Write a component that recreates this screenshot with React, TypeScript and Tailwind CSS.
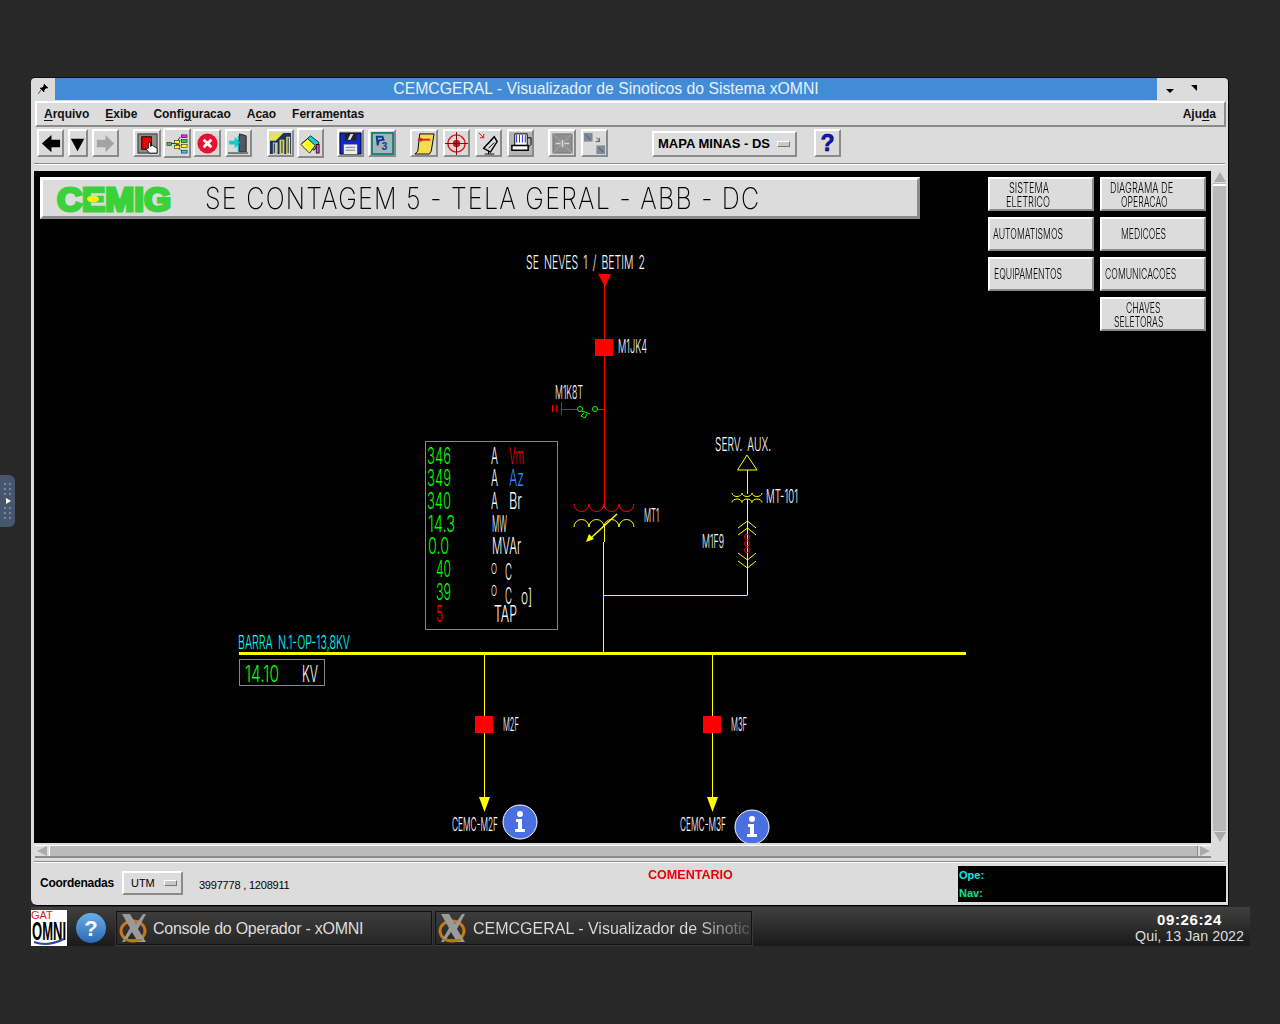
import type { ReactNode } from "react";

const raised = "border-2 border-t-white border-l-white border-b-[#8a8a8a] border-r-[#8a8a8a]";
const sans = "font-['Liberation_Sans',Arial,sans-serif]";

function T({ x, y, w, size = 19, fill = "#fff", children }: { x: number; y: number; w: number; size?: number; fill?: string; children: ReactNode }) {
  return (
    <text x={x} y={y} textLength={w} lengthAdjust="spacingAndGlyphs" wordSpacing={4} fontSize={size} fontWeight={300} fill={fill} fontFamily="Inter, 'Liberation Sans', sans-serif">
      {children}
    </text>
  );
}

function Coils({ x, y, n, r, ry, up, color }: { x: number; y: number; n: number; r: number; ry?: number; up?: boolean; color: string }) {
  let d = `M${x} ${y}`;
  for (let i = 0; i < n; i++) d += ` a${r} ${ry ?? r} 0 0 ${up ? 1 : 0} ${r * 2} 0`;
  return <path d={d} fill="none" stroke={color} strokeWidth="1" />;
}

function Info({ cx, cy }: { cx: number; cy: number }) {
  return (
    <g>
      <circle cx={cx} cy={cy} r="17" fill="#4a6fe0" stroke="#fff" strokeWidth="1" />
      <circle cx={cx} cy={cy - 8} r="3" fill="#fff" />
      <path d={`M${cx - 4} ${cy - 3}h6v10h3v3h-10v-3h3v-7h-2z`} fill="#fff" />
    </g>
  );
}

function Diagram() {
  return (
    <svg className="absolute inset-0" width="1177" height="672" viewBox="34 171 1177 672">
      <T x={526} y={269} w={119}>SE NEVES 1 / BETIM 2</T>
      <path d="M598 274h13l-6 13z" fill="#f00" />
      <path d="M604.500 280V507" stroke="#f00" />
      <rect x="595" y="339" width="18" height="17" fill="#f00" />
      <T x={618} y={353} w={29}>M1JK4</T>

      <T x={555} y={399} w={28}>M1K8T</T>
      <path d="M562 409.500H578M597 409.500H604M561.500 402V415M552.500 405V412M556.500 405V412" stroke="#f00" fill="none" />
      <g stroke="#0f0" fill="none">
        <circle cx="580" cy="409" r="2.500" />
        <circle cx="595" cy="409" r="2.500" />
        <path d="M582 411L590 414M584 413l-3 3 4 2 2-4" />
      </g>

      <Coils x={574} y={504} n={4} r={7.5} color="#f00" />
      <Coils x={574} y={527} n={4} r={7.5} up color="#ff0" />
      <path d="M617 514L592 537" stroke="#ff0" strokeWidth="1.500" />
      <path d="M586 542l3-8 5 5z" fill="#ff0" />
      <path d="M604.500 525V542M603.500 542V653M604 595.500H747.500M747.500 470V494M747.500 499V595" stroke="#ff0" fill="none" />
      <T x={644} y={522} w={15}>MT1</T>

      <T x={715} y={451} w={56}>SERV. AUX.</T>
      <path d="M747 455L737.500 470H757z" fill="none" stroke="#ff0" />
      <Coils x={732} y={493} n={3} r={5} ry={3.5} color="#ff0" />
      <Coils x={732} y={502.5} n={3} r={5} ry={3.5} up color="#ff0" />
      <T x={766} y={503} w={32}>MT-101</T>
      <path d="M738 528L747.500 521L756 528M738 535L747.500 528L756 535M738 553L747.500 560L756 553M738 561L747.500 568L756 561" fill="none" stroke="#ff0" />
      <g fill="none" stroke="#f00">
        <circle cx="747" cy="537" r="2.500" />
        <circle cx="747" cy="543.500" r="2.500" />
        <circle cx="747" cy="550" r="2.500" />
      </g>
      <T x={702} y={548} w={22}>M1F9</T>

      <rect x="425.500" y="441.500" width="132" height="188" fill="none" stroke="#7c8790" />
      <T x={427} y={464} w={24} size={23} fill="#0f0">346</T>
      <T x={427} y={486} w={24} size={23} fill="#0f0">349</T>
      <T x={427} y={509} w={24} size={23} fill="#0f0">340</T>
      <T x={428} y={532} w={27} size={23} fill="#0f0">14.3</T>
      <T x={428} y={554} w={21} size={23} fill="#0f0">0.0</T>
      <T x={436} y={577} w={15} size={23} fill="#0f0">40</T>
      <T x={436} y={600} w={15} size={23} fill="#0f0">39</T>
      <T x={436} y={622} w={7} size={23} fill="#f00">5</T>
      <T x={491} y={464} w={7} size={23}>A</T>
      <T x={491} y={486} w={7} size={23}>A</T>
      <T x={491} y={509} w={7} size={23}>A</T>
      <T x={509} y={464} w={15} size={23} fill="#f00">Vm</T>
      <T x={509} y={486} w={15} size={23} fill="#2a8cff">Az</T>
      <T x={509} y={509} w={13} size={23}>Br</T>
      <T x={492} y={532} w={15} size={23}>MW</T>
      <T x={492} y={554} w={29} size={23}>MVAr</T>
      <T x={491} y={574} w={6} size={15}>O</T>
      <T x={505} y={580} w={7} size={23}>C</T>
      <T x={491} y={596} w={6} size={15}>O</T>
      <T x={505} y={604} w={7} size={23}>C</T>
      <T x={521} y={604} w={11} size={21}>o]</T>
      <T x={494} y={622} w={23} size={23}>TAP</T>

      <T x={238} y={649} w={112} fill="#0ff">BARRA N.1-OP-13,8KV</T>
      <rect x="239" y="652" width="727" height="3" fill="#ff0" />
      <rect x="239.500" y="659.500" width="85" height="26" fill="none" stroke="#7c8790" />
      <T x={245} y={682} w={34} size={23} fill="#0f0">14.10</T>
      <T x={302} y={682} w={16} size={23}>KV</T>

      <path d="M484.500 655V800M712.500 655V800" stroke="#ff0" />
      <rect x="475" y="716" width="18" height="17" fill="#f00" />
      <rect x="703" y="716" width="18" height="17" fill="#f00" />
      <T x={503} y={731} w={16}>M2F</T>
      <T x={731} y={731} w={16}>M3F</T>
      <path d="M479 797h11l-5.500 15zM707 797h11l-5.500 15z" fill="#ff0" />
      <T x={452} y={831} w={46}>CEMC-M2F</T>
      <T x={680} y={831} w={46}>CEMC-M3F</T>
      <Info cx={520} cy={822} />
      <Info cx={752} cy={827} />
    </svg>
  );
}

const icons: Record<string, ReactNode> = {
  back: <path d="M3 12l10-9v5h9v8h-9v5z" fill="#000" />,
  down: <path d="M4 7h14l-7 13z" fill="#000" />,
  fwd: <path d="M21 12l-9-9v5H3v8h9v5z" fill="#a3a3a3" />,
  hand: (
    <g>
      <rect x="2" y="2" width="20" height="20" fill="#8c8c8c" stroke="#333" />
      <rect x="6" y="5" width="10" height="13" fill="#e00" stroke="#000" />
      <path d="M13 11h2v4l2-1 5 3v5h-8l-4-5h3z" fill="#fff" stroke="#000" strokeWidth="0.8" />
    </g>
  ),
  tree: (
    <g>
      <path d="M4 12h6M10 12L15 5M10 12L15 9M10 12L15 14M10 12L15 19" stroke="#333" fill="none" />
      <rect x="1" y="11" width="5" height="3" fill="#3c3" stroke="#000" strokeWidth=".5" />
      <rect x="9" y="9" width="5" height="3" fill="#ff0" stroke="#000" strokeWidth=".5" />
      <rect x="9" y="14" width="5" height="3" fill="#ff0" stroke="#000" strokeWidth=".5" />
      <rect x="16" y="3" width="6" height="3" fill="#d3d" stroke="#000" strokeWidth=".5" />
      <rect x="16" y="8" width="6" height="3" fill="#3c3" stroke="#000" strokeWidth=".5" />
      <rect x="16" y="13" width="6" height="3" fill="#ff0" stroke="#000" strokeWidth=".5" />
      <rect x="16" y="19" width="6" height="3" fill="#3cc" stroke="#000" strokeWidth=".5" />
    </g>
  ),
  stop: (
    <g>
      <circle cx="12" cy="12" r="10.500" fill="#e8102a" />
      <path d="M8 8l8 8M16 8l-8 8" stroke="#fff" strokeWidth="3" />
    </g>
  ),
  door: (
    <g>
      <path d="M13 2l7 2v17h-7z" fill="#556" stroke="#222" />
      <path d="M1 22h21" stroke="#777" strokeWidth="2" />
      <path d="M2 9h6V5l6 6-6 6v-4H2z" fill="#1cc" />
      <path d="M12 4v17" stroke="#1aa" strokeWidth="1.500" />
    </g>
  ),
  city: (
    <g>
      <rect x="1" y="1" width="22" height="22" fill="#15355f" />
      <path d="M1 1h14L7 9H1z" fill="#e8e060" />
      <rect x="4" y="11" width="5" height="12" fill="#c8c8a0" />
      <rect x="11" y="8" width="5" height="15" fill="#d8d070" />
      <rect x="18" y="5" width="4" height="18" fill="#f0e070" />
      <path d="M5.500 12v10M13.500 9v13M20 6v16" stroke="#123" />
    </g>
  ),
  tags: (
    <g stroke="#000" strokeWidth="0.8">
      <path d="M12 4l9 7-5 8-13-7z" fill="#2cc" />
      <path d="M9 7l8 7-6 8-9-9z" fill="#ff3" />
      <rect x="18" y="13" width="3" height="9" fill="#e4c" />
    </g>
  ),
  floppy: (
    <g>
      <path d="M1 1h22v22H1z" fill="#1228c8" stroke="#000" />
      <rect x="6" y="1" width="12" height="8" fill="#222" />
      <path d="M9 8l3-6h3l-3 6z" fill="#ddd" />
      <rect x="5" y="13" width="14" height="10" fill="#eee" />
      <path d="M7 16h10M7 19h10" stroke="#777" />
    </g>
  ),
  p3: (
    <g>
      <rect x="1" y="1" width="22" height="22" fill="#a6b6b6" stroke="#1a8080" strokeWidth="2" />
      <path d="M6 5h6l1 3-5 1-1 5z" fill="none" stroke="#123a90" strokeWidth="2" />
      <text x="11" y="19" fontSize="11" fontWeight="700" fill="#123a90" fontFamily="'Liberation Sans', sans-serif">3</text>
    </g>
  ),
  note: (
    <g>
      <path d="M7 2h15l-3 18-2 3H2l3-3z" fill="#f2dc50" stroke="#000" />
      <path d="M5 8h13" stroke="#e02020" strokeWidth="2" />
      <circle cx="8" cy="8" r="2" fill="#e02020" />
    </g>
  ),
  target: (
    <g fill="none" stroke="#e01010">
      <circle cx="12" cy="12" r="9" strokeWidth="1.500" />
      <circle cx="12" cy="12" r="3.500" fill="#e01010" />
      <path d="M0 12h24M12 0v24" stroke="#800" />
    </g>
  ),
  dish: (
    <g fill="none" stroke="#000">
      <path d="M7 17L18 5l3 5-7 11z" fill="#ddd" strokeWidth="1.500" />
      <path d="M10 14l6-6M12 17l6-6M8 23h10M12 19v4" />
      <path d="M2 1l5 5M7 2v4H3" stroke="#e01010" />
    </g>
  ),
  printer: (
    <g stroke="#000" fill="none">
      <rect x="0" y="0" width="24" height="24" fill="#b4b4b4" stroke="none" />
      <path d="M6 2h13v12H6z" fill="#fff" />
      <path d="M8 3v8M11 3v8M14 3v8M17 3v8" stroke="#22c" />
      <path d="M3 14h17v5H3z" fill="#fff" strokeWidth="1.500" />
      <path d="M19 6h4v7l-3 3" />
    </g>
  ),
  zoomoff: (
    <g>
      <rect x="2" y="2" width="20" height="20" fill="#8e8e8e" stroke="#777" />
      <path d="M2 2l20 20M22 2L2 22" stroke="#aaa" />
      <path d="M5 12h5M14 12h5M12 8v8" stroke="#d8d8d8" strokeWidth="1.500" />
    </g>
  ),
  swapoff: (
    <g>
      <rect x="1" y="1" width="9" height="9" fill="#7f8a99" />
      <rect x="14" y="14" width="9" height="9" fill="#7f8a99" />
      <path d="M14 6l4 4M17 6v4h-4M3 3l5 5M16 16l5 5" stroke="#555" fill="none" />
    </g>
  ),
  help: (
    <text x="12" y="20" textAnchor="middle" fontSize="24" fontWeight="700" fill="#1010e0" stroke="#000" strokeWidth="0.600" fontFamily="'Liberation Sans', sans-serif">?</text>
  ),
};

function ToolBtn({ icon, ml = 0, w = 27, tall }: { icon: string; ml?: number; w?: number; tall?: boolean }) {
  return (
    <div className={`${raised} flex items-center justify-center bg-[#dadada] ${tall ? "h-[30px]" : "h-[28px]"}`} style={{ marginLeft: ml, width: w }}>
      <svg className="overflow-visible" width="23" height="23" viewBox="0 0 24 24">{icons[icon]}</svg>
    </div>
  );
}

function Mnemonic({ pre, u, post }: { pre: string; u: string; post: string }) {
  return (
    <span>
      {pre}
      <span className="underline underline-offset-2">{u}</span>
      {post}
    </span>
  );
}

type Line = { t: string; ml: number };

function SideBtn({ lines }: { lines: Line[] }) {
  return (
    <div className={`${raised} h-[34px] w-[106px] flex flex-col justify-center bg-[#dcdcdc] font-['Inter',sans-serif] text-[14px] font-light leading-[14px] text-black ${lines.length > 1 ? "pt-[2px]" : ""}`}>
      {lines.map((l) => (
        <span key={l.t} className={`block origin-left whitespace-nowrap ${l.t.length >= 12 || l.t === "OPERACAO" || l.t === "MEDICOES" || l.t === "CHAVES" || l.t === "SELETORAS" ? "scale-x-[0.62]" : "scale-x-[0.66]"}`} style={{ marginLeft: l.ml }}>
          {l.t}
        </span>
      ))}
    </div>
  );
}

function XIcon() {
  return (
    <svg className="shrink-0" width="32" height="32" viewBox="0 0 32 32">
      <ellipse cx="15" cy="19" rx="12" ry="10" fill="none" stroke="#c87818" strokeWidth="3" />
      <path d="M4 2h8l6 10 7-10h3L20 17l8 13h-8l-6-10-7 10H4l8-14z" fill="#9a9a9a" />
      <path d="M6 28h18" stroke="#a08020" strokeWidth="2" />
    </svg>
  );
}

function TaskBtn({ label, fade }: { label: string; fade?: boolean }) {
  return (
    <div className="flex h-[34px] items-center overflow-hidden border border-[#111] bg-gradient-to-b from-[#3c3c3c] to-[#272727] pl-[1px] outline outline-[#3a3a3a]">
      <XIcon />
      <span className={`mt-[1px] whitespace-nowrap text-[16px] ${fade ? "ml-[4px] bg-gradient-to-r from-[#dddddd] from-80% to-[#555555] bg-clip-text text-transparent" : "ml-[3px] tracking-[-0.25px] text-[#dddddd]"}`}>{label}</span>
    </div>
  );
}

function GatLogo() {
  return (
    <svg className="shrink-0 bg-white" width="36" height="36" viewBox="0 0 36 36" fontFamily="'Liberation Sans', sans-serif">
      <text x="0" y="9" fontSize="11" fill="#e02020">GAT</text>
      <text x="1" y="30" textLength="34" lengthAdjust="spacingAndGlyphs" fontSize="25" fontWeight="700" fill="#000">OMNI</text>
      <path d="M3 32q14 5 30-3" fill="none" stroke="#2848a8" strokeWidth="2" />
    </svg>
  );
}

export default function App() {
  return (
    <div className={`relative h-screen w-full overflow-hidden bg-[#282828] pl-[31px] pt-[78px] ${sans}`}>
      <div className="absolute left-0 top-[475px] flex h-[52px] w-[15px] flex-col items-center justify-center gap-[3px] rounded-r-md bg-[#46566c]">
        <div className="grid grid-cols-2 gap-[3px]">
          {[0, 1, 2, 3, 4, 5].map((i) => <span key={i} className="h-[2px] w-[2px] bg-[#77879b]" />)}
        </div>
        <span className="ml-[2px] h-0 w-0 border-y-[3px] border-l-[5px] border-y-transparent border-l-white" />
        <div className="grid grid-cols-2 gap-[3px]">
          {[0, 1, 2, 3, 4, 5].map((i) => <span key={i} className="h-[2px] w-[2px] bg-[#77879b]" />)}
        </div>
      </div>

      <div className="flex h-[827px] w-[1197px] flex-col rounded-t-[4px] rounded-bl-[6px] bg-[#dcdcdc] shadow-[1px_1px_0_#000,0_-1px_0_#111]">
        {/* title bar */}
        <div className="flex h-[22px] shrink-0 items-center">
          <div className="flex h-full w-[24px] items-center justify-center text-[11px]">
            <svg width="10" height="10" viewBox="0 0 10 10"><path d="M6 0l4 4-2 0-2 2 0 2-4-4 2 0 2-2zM3 6L0 10" fill="#000" stroke="#000" strokeWidth=".6" /></svg>
          </div>
          <div className="flex h-full w-[1102px] items-center justify-center bg-[#428bd7] text-[15.75px] text-[#e6f0fa]">
            CEMCGERAL - Visualizador de Sinoticos do Sistema xOMNI
          </div>
          <div className="flex flex-1 items-center pl-[9px]">
            <span className="mt-[3px] h-0 w-0 border-x-[4px] border-t-[4px] border-x-transparent border-t-black" />
            <span className="ml-[17px] -mt-[3px] h-0 w-0 border-l-[6px] border-t-[6px] border-l-transparent border-t-black" />
          </div>
        </div>

        {/* menu */}
        <div className={`${raised} ml-[4px] mr-[2px] mt-[1px] flex h-[26px] shrink-0 items-center gap-[16px] bg-[#dcdcdc] pl-[7px] pr-[8px] text-[12px] font-bold text-[#111]`}>
          <Mnemonic pre="" u="A" post="rquivo" />
          <Mnemonic pre="" u="E" post="xibe" />
          <Mnemonic pre="Confi" u="g" post="uracao" />
          <Mnemonic pre="A" u="c" post="ao" />
          <Mnemonic pre="Ferra" u="m" post="entas" />
          <span className="ml-auto"><Mnemonic pre="Aju" u="d" post="a" /></span>
        </div>

        {/* toolbar */}
        <div className="flex h-[32px] shrink-0 items-center pl-[6px]">
          <ToolBtn icon="back" />
          <ToolBtn icon="down" ml={4} w={20} />
          <ToolBtn icon="fwd" ml={4} />
          <ToolBtn icon="hand" ml={14} w={28} />
          <ToolBtn icon="tree" ml={2} w={28} tall />
          <ToolBtn icon="stop" ml={2} w={28} />
          <ToolBtn icon="door" ml={4} />
          <ToolBtn icon="city" ml={15} />
          <ToolBtn icon="tags" ml={3} tall />
          <ToolBtn icon="floppy" ml={13} />
          <ToolBtn icon="p3" ml={4} w={28} />
          <ToolBtn icon="note" ml={14} w={28} />
          <ToolBtn icon="target" ml={5} />
          <ToolBtn icon="dish" ml={5} />
          <ToolBtn icon="printer" ml={5} w={27} />
          <ToolBtn icon="zoomoff" ml={14} w={28} />
          <ToolBtn icon="swapoff" ml={5} w={27} />
          <div className={`${raised} ml-[44px] mt-[2px] flex h-[26px] w-[145px] items-center bg-[#dcdcdc] pl-[4px] text-[13px] font-bold text-black`}>
            MAPA MINAS - DS
            <span className="ml-[7px] h-[6px] w-[13px] border border-t-white border-l-white border-b-[#777] border-r-[#777] bg-[#c8c8c8]" />
          </div>
          <ToolBtn icon="help" ml={17} />
        </div>

        {/* separator */}
        <div className="mx-[3px] mt-[4px] h-[2px] shrink-0 border-t border-[#8c8c8c] bg-white" />
        <div className="h-[6px] shrink-0" />

        {/* canvas + vertical scrollbar */}
        <div className="flex h-[672px] shrink-0 pl-[3px]">
          <div className="relative h-[672px] w-[1177px] bg-black">
            <Diagram />
            <div className="relative flex pl-[6px] pt-[6px]">
              <div className="flex h-[42px] w-[880px] items-center border-[3px] border-t-white border-l-white border-b-[#8a8a8a] border-r-[#8a8a8a] bg-[#dcdcdc]">
                <svg className="ml-[13px] shrink-0" width="118" height="40" viewBox="0 0 118 40">
                  <text x="1" y="33" textLength="114" lengthAdjust="spacingAndGlyphs" fontSize="33" fontWeight="700" fill="#3ad23a" stroke="#3ad23a" strokeWidth="3" fontFamily="'Liberation Sans', sans-serif">CEMIG</text>
                  <ellipse cx="37" cy="21" rx="6" ry="3.500" fill="#f4f020" />
                </svg>
                <span className="ml-[31px] origin-left scale-x-[0.836] whitespace-nowrap font-['Inter',sans-serif] text-[30px] font-extralight tracking-[1.5px] text-black">
                  SE CONTAGEM 5 - TELA GERAL - ABB - DC
                </span>
              </div>
              <div className="ml-[68px] grid grid-cols-[106px_106px] auto-rows-[34px] gap-x-[6px] gap-y-[6px]">
                <SideBtn lines={[{ t: "SISTEMA", ml: 19 }, { t: "ELETRICO", ml: 16 }]} />
                <SideBtn lines={[{ t: "DIAGRAMA DE", ml: 8 }, { t: "OPERACAO", ml: 19 }]} />
                <SideBtn lines={[{ t: "AUTOMATISMOS", ml: 3 }]} />
                <SideBtn lines={[{ t: "MEDICOES", ml: 19 }]} />
                <SideBtn lines={[{ t: "EQUIPAMENTOS", ml: 4 }]} />
                <SideBtn lines={[{ t: "COMUNICACOES", ml: 3 }]} />
                <div />
                <SideBtn lines={[{ t: "CHAVES", ml: 24 }, { t: "SELETORAS", ml: 12 }]} />
              </div>
            </div>
          </div>
          <div className="ml-[1px] flex w-[14px] flex-col border-l border-[#dcdcdc] bg-[#b9b9b9]">
            <div className="flex h-[12px] items-center justify-center bg-[#dcdcdc]">
              <span className="h-0 w-0 border-x-[6px] border-b-[10px] border-x-transparent border-b-[#aaaaaa]" />
            </div>
            <div className="mx-0 mt-[1px] flex-1 border-t-2 border-white bg-[#b9b9b9]" />
            <div className="flex h-[12px] items-center justify-center bg-[#dcdcdc]">
              <span className="h-0 w-0 border-x-[6px] border-t-[10px] border-x-transparent border-t-[#aaaaaa]" />
            </div>
          </div>
        </div>

        {/* horizontal scrollbar */}
        <div className="mt-[2px] flex h-[13px] shrink-0 pl-[4px]">
          <div className="flex w-[1176px] border-t border-white bg-[#bbbbbb] border-b-2 border-b-[#8c8c8c]">
            <div className="flex w-[14px] items-center justify-center bg-[#dcdcdc]">
              <span className="h-0 w-0 border-y-[5px] border-r-[10px] border-y-transparent border-r-[#aaaaaa]" />
            </div>
            <div className="flex-1 border-l border-white" />
            <div className="flex w-[14px] items-center justify-center border-l border-[#8c8c8c] bg-[#dcdcdc]">
              <span className="h-0 w-0 border-y-[5px] border-l-[10px] border-y-transparent border-l-[#aaaaaa]" />
            </div>
          </div>
        </div>

        <div className="mx-[3px] mt-[3px] h-[2px] shrink-0 border-t border-[#8c8c8c] bg-white" />

        {/* status */}
        <div className="flex flex-1 items-start">
          <span className="ml-[9px] mt-[11px] text-[12px] font-bold tracking-[-0.25px] text-black">Coordenadas</span>
          <div className={`${raised} ml-[8px] mt-[8px] flex h-[24px] w-[61px] items-center bg-[#dcdcdc] pl-[7px] text-[11px] text-black`}>
            UTM
            <span className="ml-[9px] h-[6px] w-[13px] border border-t-white border-l-white border-b-[#777] border-r-[#777] bg-[#c8c8c8]" />
          </div>
          <span className="ml-[16px] mt-[14px] text-[11px] tracking-[-0.2px] text-black">3997778 , 1208911</span>
          <span className="ml-[358px] mt-[2px] origin-left scale-x-[0.966] text-[13px] font-bold text-[#ee0000]">COMENTARIO</span>
          <div className="ml-auto mr-[2px] mt-[3px] h-[36px] w-[268px] bg-black pl-[1px] pt-0 text-[11px] font-bold leading-[18px]">
            <div className="text-[#00e8e8]">Ope:</div>
            <div className="text-[#00e88a]">Nav:</div>
          </div>
        </div>
      </div>

      {/* task bar */}
      <div className="mt-[2px] flex h-[39px] w-[1219px] items-center bg-gradient-to-b from-[#404040] to-[#1a1a1a] pt-[3px] text-[#eee]">
        <GatLogo />
        <div className="ml-[9px] flex h-[30px] w-[30px] items-center justify-center rounded-full bg-gradient-to-b from-[#6aaee8] to-[#2a6ab0] text-[22px] font-bold text-white">?</div>
        <div className="ml-[10px] w-[316px]"><TaskBtn label="Console do Operador - xOMNI" /></div>
        <div className="ml-[3px] w-[317px]"><TaskBtn label="CEMCGERAL - Visualizador de Sinotic" fade /></div>
        <div className="ml-auto mr-[6px] flex flex-col items-center">
          <span className="text-[15px] font-bold leading-[17px] tracking-[0.6px] text-white">09:26:24</span>
          <span className="text-[14.3px] leading-[17px] text-[#dddddd]">Qui, 13 Jan 2022</span>
        </div>
      </div>
    </div>
  );
}
